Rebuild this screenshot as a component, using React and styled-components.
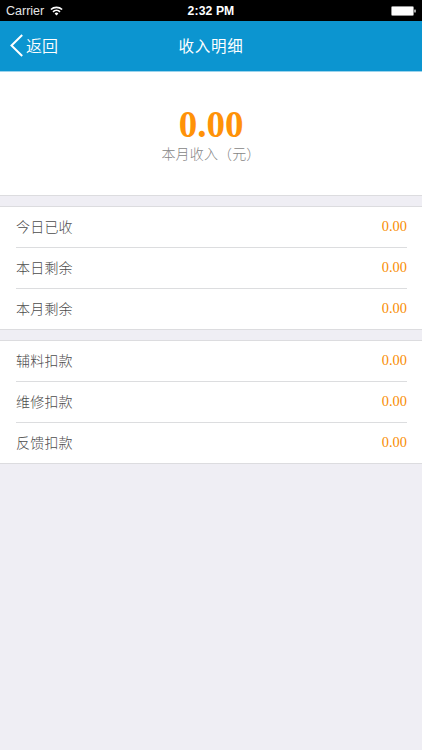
import React from "react";
import styled, { createGlobalStyle } from "styled-components";

const Global = createGlobalStyle`
  * { box-sizing: border-box; }
  body {
    margin: 0;
    background: #efeef4;
    font-family: "Liberation Sans", "Noto Sans CJK SC", sans-serif;
  }
`;

const Screen = styled.div`
  display: flex;
  flex-direction: column;
  height: 750px;
  overflow: hidden;
  background: #efeef4;
`;

const StatusBar = styled.div`
  display: grid;
  grid-template-columns: 1fr auto 1fr;
  align-items: center;
  flex: none;
  height: 21px;
  padding: 1px 6px 0;
  background: #000;
  color: #fff;
  font-size: 12.5px;
  line-height: 20px;
`;

const Carrier = styled.div`
  display: flex;
  align-items: center;
  gap: 6px;
  color: #e6e6e6;
`;

const Clock = styled.div`
  font-weight: 700;
  font-size: 12.2px;
  letter-spacing: 0.1px;
`;

const BatterySlot = styled.div`
  display: flex;
  justify-content: flex-end;
`;

const NavBar = styled.header`
  display: grid;
  grid-template-columns: 1fr auto 1fr;
  align-items: center;
  flex: none;
  height: 51px;
  padding: 0 10px 1px;
  background: #0c95d0;
  border-bottom: 1px solid #9bd3ec;
  color: #fff;
`;

const BackButton = styled.button`
  display: flex;
  align-items: center;
  gap: 3px;
  padding: 0;
  border: 0;
  background: none;
  color: inherit;
  font-family: "Noto Sans CJK SC", sans-serif;
  font-weight: 350;
  font-size: 16px;
  line-height: 24px;
`;

const BackText = styled.span`
  padding-bottom: 2px;
`;

const Title = styled.h1`
  margin: 0;
  padding-bottom: 2px;
  font-family: "Noto Sans CJK SC", sans-serif;
  font-size: 15.5px;
  font-weight: 400;
  letter-spacing: 0.8px;
  line-height: 24px;
`;

const Summary = styled.section`
  display: flex;
  flex-direction: column;
  align-items: center;
  flex: none;
  height: 124px;
  padding-top: 32px;
  background: #fff;
  border-bottom: 1px solid #dcdcdf;
`;

const Total = styled.div`
  font-family: "Liberation Serif", serif;
  font-weight: 700;
  font-size: 37px;
  line-height: 42px;
  color: #ff9208;
`;

const Caption = styled.div`
  margin-top: -3px;
  font-family: "Noto Sans CJK SC", sans-serif;
  font-weight: 300;
  font-size: 14px;
  letter-spacing: 0.15px;
  line-height: 20px;
  color: #858585;
`;

const Group = styled.section`
  flex: none;
  margin-top: 10px;
  padding: 0 15px 0 16px;
  background: #fff;
  border-top: 1px solid #dcdcdf;
  border-bottom: 1px solid #dcdcdf;
`;

const Row = styled.div`
  display: flex;
  align-items: center;
  justify-content: space-between;
  height: ${(p) => p.$height}px;
  padding-bottom: 2px;

  & + & {
    border-top: 1px solid #dcdddf;
  }
`;

const Label = styled.span`
  font-family: "Noto Sans CJK SC", sans-serif;
  font-weight: 300;
  font-size: 14px;
  letter-spacing: 0.2px;
  line-height: 20px;
  color: #4c4c4c;
`;

const Amount = styled.span`
  font-family: "Liberation Serif", serif;
  font-size: 14.4px;
  line-height: 20px;
  color: #f98c00;
`;

const income = ["今日已收", "本日剩余", "本月剩余"];
const deductions = ["辅料扣款", "维修扣款", "反馈扣款"];

function Wifi() {
  return (
    <svg width="13" height="10" viewBox="0 0 13 10" fill="none" stroke="#fff" strokeWidth="1.7">
      <path d="M0.9 3.5a8.2 8.2 0 0 1 11.2 0" />
      <path d="M3 5.9a5 5 0 0 1 7 0" />
      <path d="M6.5 9.4L4.6 7.5a2.8 2.8 0 0 1 3.8 0z" fill="#fff" stroke="none" />
    </svg>
  );
}

function Battery() {
  return (
    <svg width="26" height="11" viewBox="0 0 26 11">
      <rect x="1.5" y="0.5" width="22" height="9" rx="1" fill="#fff" stroke="#999" strokeWidth="0.8" />
      <rect x="24.2" y="3.6" width="1.6" height="3" rx="0.5" fill="#ccc" />
    </svg>
  );
}

function Chevron() {
  return (
    <svg width="13" height="23" viewBox="0 0 13 23" fill="none" stroke="#fff" strokeWidth="2">
      <path d="M12.2 1L1.5 11.5L12.2 22" />
    </svg>
  );
}

function AmountGroup({ labels }) {
  return (
    <Group>
      {labels.map((label, i) => (
        <Row key={label} $height={i === 0 ? 40 : 41}>
          <Label>{label}</Label>
          <Amount>0.00</Amount>
        </Row>
      ))}
    </Group>
  );
}

export default function App() {
  return (
    <Screen>
      <Global />
      <StatusBar>
        <Carrier>
          Carrier
          <Wifi />
        </Carrier>
        <Clock>2:32 PM</Clock>
        <BatterySlot>
          <Battery />
        </BatterySlot>
      </StatusBar>
      <NavBar>
        <BackButton>
          <Chevron />
          <BackText>返回</BackText>
        </BackButton>
        <Title>收入明细</Title>
      </NavBar>
      <Summary>
        <Total>0.00</Total>
        <Caption>本月收入（元）</Caption>
      </Summary>
      <AmountGroup labels={income} />
      <AmountGroup labels={deductions} />
    </Screen>
  );
}
